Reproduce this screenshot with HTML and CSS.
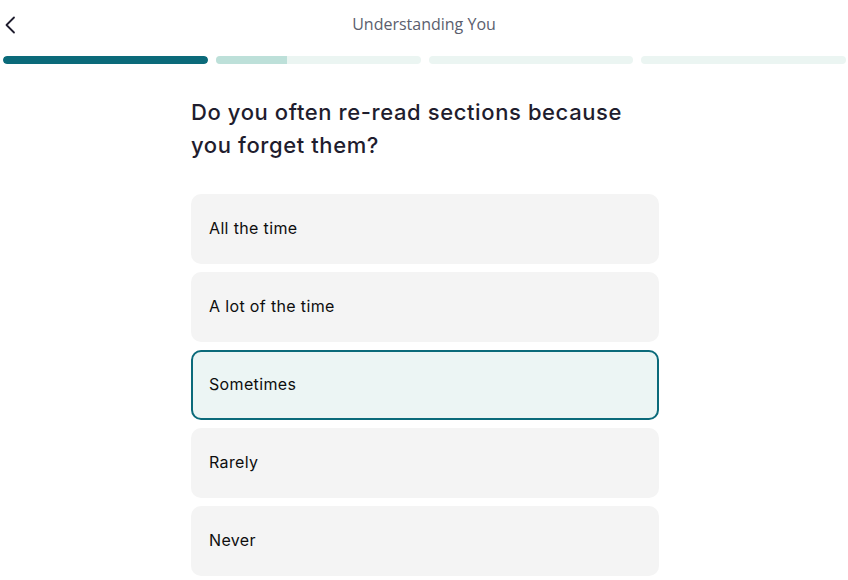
FILE: index.html
```html
<!DOCTYPE html>
<html lang="en">
<head>
<meta charset="utf-8">
<title>Understanding You</title>
<link rel="stylesheet" href="styles.css">
</head>
<body>
<header class="topbar">
  <button class="back" aria-label="Back">
    <svg width="12" height="18" viewBox="0 0 12 18"><path d="M10 1.5 L2.5 9 L10 16.5" fill="none" stroke="#1f1d2e" stroke-width="1.8" stroke-linecap="round" stroke-linejoin="round"/></svg>
  </button>
  <div class="title">Understanding You</div>
</header>
<div class="progress">
  <div class="seg"><div class="fill done" style="width:100%"></div></div>
  <div class="seg"><div class="fill part" style="width:35%"></div></div>
  <div class="seg"></div>
  <div class="seg"></div>
</div>
<main class="content">
  <h1 class="question">Do you often re-read sections because you forget them?</h1>
  <div class="options">
    <div class="option">All the time</div>
    <div class="option">A lot of the time</div>
    <div class="option selected">Sometimes</div>
    <div class="option">Rarely</div>
    <div class="option">Never</div>
  </div>
</main>
</body>
</html>
```
FILE: styles.css
```css
* { box-sizing: border-box; }
html, body { margin: 0; padding: 0; background: #ffffff; }
body { font-family: "Inter", "Noto Sans", sans-serif; color: #1f1d2e; }
.topbar {
  height: 48px;
  display: flex;
  align-items: center;
  justify-content: center;
  position: relative;
}
.back {
  position: absolute;
  left: 3px;
  top: 15px;
  border: 0;
  background: none;
  padding: 0;
  width: 14px;
  height: 20px;
  display: flex;
  align-items: center;
  justify-content: center;
}
.title {
  font-family: "Open Sans", sans-serif;
  font-size: 16px;
  color: #5b5e6e;
}
.progress {
  margin-top: 8px;
  display: flex;
  gap: 8px;
  padding: 0 2px 0 3px;
}
.seg {
  flex: 1;
  height: 8px;
  border-radius: 4px;
  background: #ebf5f2;
  overflow: hidden;
}
.fill { height: 100%; }
.fill.done { background: #0b6a7a; border-radius: 4px; }
.fill.part { background: #bde0d9; }
.content {
  width: 468px;
  margin: 32px auto 0;
  position: relative;
  left: 1px;
}
.question {
  margin: 0;
  font-family: "Inter", sans-serif;
  font-weight: 500;
  font-size: 22px;
  letter-spacing: 0.6px;
  line-height: 33px;
  color: #1f1d2e;
  width: 440px;
}
.options {
  margin-top: 32px;
  display: flex;
  flex-direction: column;
  gap: 8px;
}
.option {
  height: 70px;
  border-radius: 10px;
  background: #f4f4f4;
  display: flex;
  align-items: center;
  padding: 0 18px 2px;
  font-family: "Inter", sans-serif;
  font-size: 16px;
  letter-spacing: 0.35px;
  color: #0e0e0e;
}
.option.selected {
  background: #ecf5f4;
  border: 2px solid #0b6a7a;
  padding: 0 16px 2px;
}
```
